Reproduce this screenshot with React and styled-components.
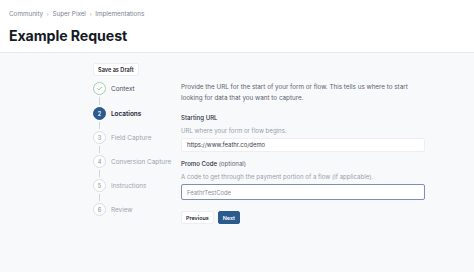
import React from "react";
import styled, { createGlobalStyle } from "styled-components";

const Global = createGlobalStyle`
  html, body { margin: 0; padding: 0; }
  body { font-family: Inter, "Noto Sans", sans-serif; background: #f8f9fb; color: #1f2430; }
  * { box-sizing: border-box; }
`;

const Header = styled.header`
  background: #ffffff;
  border-bottom: 1px solid #e7e9ee;
  padding: 9px 9px 0 9px;
  height: 53px;
`;

const Crumbs = styled.nav`
  display: flex;
  align-items: center;
  gap: 3.5px;
  font-size: 6.3px;
  color: #7b8190;
  line-height: 10px;
`;

const Sep = styled.span`
  color: #a8adb8;
  font-size: 6px;
`;

const Title = styled.h1`
  margin: 7px 0 0 0;
  font-size: 14.2px;
  font-weight: 700;
  letter-spacing: -0.1px;
  color: #151a26;
  line-height: 20px;
`;

const Body = styled.main`
  display: flex;
  padding: 10px 0 0 93px;
`;

const Side = styled.aside`
  width: 88px;
  display: flex;
  flex-direction: column;
  align-items: flex-start;
`;

const DraftButton = styled.button`
  font-family: inherit;
  font-size: 5.6px;
  font-weight: 600;
  color: #1f2430;
  background: #ffffff;
  border: 1px solid #eceef2;
  border-radius: 2px;
  height: 13px;
  padding: 0 4px;
  margin-bottom: 6px;
`;

const Steps = styled.ol`
  list-style: none;
  margin: 0;
  padding: 0;
  display: flex;
  flex-direction: column;
`;

const Step = styled.li`
  display: flex;
  align-items: center;
  gap: 5px;
  height: 13px;
  position: relative;
  margin-bottom: ${p => (p.$first ? 12 : 11)}px;
  font-size: 6.4px;
  white-space: nowrap;
  font-weight: ${p => (p.$state === "active" ? 600 : 400)};
  color: ${p =>
    p.$state === "active" ? "#1b2130" : p.$state === "done" ? "#4a505c" : "#9ea3ad"};
  &:not(:last-child)::after {
    content: "";
    position: absolute;
    left: 6px;
    top: 15px;
    width: 1px;
    height: ${p => (p.$first ? 8 : 7)}px;
    background: #cfd3da;
  }
`;

const Circle = styled.span`
  width: 13px;
  height: 13px;
  border-radius: 50%;
  display: flex;
  align-items: center;
  justify-content: center;
  font-size: 5.5px;
  font-weight: 600;
  flex-shrink: 0;
  background: ${p => (p.$state === "active" ? "#2b5a8c" : "#ffffff")};
  color: ${p => (p.$state === "active" ? "#ffffff" : "#a0a5ae")};
  border: 1px solid
    ${p => (p.$state === "active" ? "#2b5a8c" : p.$state === "done" ? "#9fd0a6" : "#dadde3")};
`;

const Content = styled.section`
  width: 244px;
  padding-top: 18.5px;
  display: flex;
  flex-direction: column;
`;

const Intro = styled.p`
  margin: 0 0 9px 0;
  font-size: 6.3px;
  line-height: 11px;
  color: #5b616d;
  width: 244px;
`;

const Field = styled.div`
  display: flex;
  flex-direction: column;
  margin-bottom: 7.5px;
`;

const Label = styled.label`
  font-size: 6.1px;
  font-weight: 500;
  color: #2a303c;
  line-height: 9px;
  margin-bottom: 4px;
`;

const Optional = styled.span`
  font-weight: 400;
  color: #5b616d;
`;

const Help = styled.div`
  font-size: 6.1px;
  color: #989ea8;
  line-height: 9px;
  margin-bottom: 3px;
`;

const Input = styled.input`
  font-family: inherit;
  font-size: 5.9px;
  color: ${p => (p.$focus ? "#8a909b" : "#3a404b")};
  height: ${p => (p.$focus ? "16px" : "14px")};
  width: 244px;
  padding: 0 5px;
  background: #ffffff;
  border: 1px solid ${p => (p.$focus ? "#7e8fb6" : "#eceef2")};
  border-radius: 2px;
  outline: none;
`;

const Actions = styled.div`
  display: flex;
  gap: 4px;
  margin-top: 3.5px;
`;

const Btn = styled.button`
  font-family: inherit;
  font-size: 5.4px;
  font-weight: 600;
  height: 13px;
  padding: 0 4px;
  border-radius: 2px;
  border: 1px solid ${p => (p.$primary ? "#2b5a8c" : "#eceef2")};
  background: ${p => (p.$primary ? "#2b5a8c" : "#ffffff")};
  color: ${p => (p.$primary ? "#ffffff" : "#1f2430")};
`;

const Check = () => (
  <svg width="7" height="7" viewBox="0 0 24 24" fill="none" stroke="#6fb97a" strokeWidth="3" strokeLinecap="round" strokeLinejoin="round">
    <path d="M5 12.5l4.5 4.5L19 7.5" />
  </svg>
);

const steps = [
  { n: 1, label: "Context", state: "done" },
  { n: 2, label: "Locations", state: "active" },
  { n: 3, label: "Field Capture", state: "todo" },
  { n: 4, label: "Conversion Capture", state: "todo" },
  { n: 5, label: "Instructions", state: "todo" },
  { n: 6, label: "Review", state: "todo" },
];

export default function App() {
  return (
    <>
      <Global />
      <Header>
        <Crumbs>
          <span>Community</span>
          <Sep>›</Sep>
          <span>Super Pixel</span>
          <Sep>›</Sep>
          <span>Implementations</span>
        </Crumbs>
        <Title>Example Request</Title>
      </Header>
      <Body>
        <Side>
          <DraftButton>Save as Draft</DraftButton>
          <Steps>
            {steps.map((s, i) => (
              <Step key={s.n} $state={s.state} $first={i === 0}>
                <Circle $state={s.state}>{s.state === "done" ? <Check /> : s.n}</Circle>
                {s.label}
              </Step>
            ))}
          </Steps>
        </Side>
        <Content>
          <Intro>
            Provide the URL for the start of your form or flow. This tells us where to start
            looking for data that you want to capture.
          </Intro>
          <Field>
            <Label>Starting URL</Label>
            <Help>URL where your form or flow begins.</Help>
            <Input defaultValue="https://www.feathr.co/demo" />
          </Field>
          <Field>
            <Label>
              Promo Code <Optional>(optional)</Optional>
            </Label>
            <Help>A code to get through the payment portion of a flow (if applicable).</Help>
            <Input $focus defaultValue="FeathrTestCode" />
          </Field>
          <Actions>
            <Btn>Previous</Btn>
            <Btn $primary>Next</Btn>
          </Actions>
        </Content>
      </Body>
    </>
  );
}
